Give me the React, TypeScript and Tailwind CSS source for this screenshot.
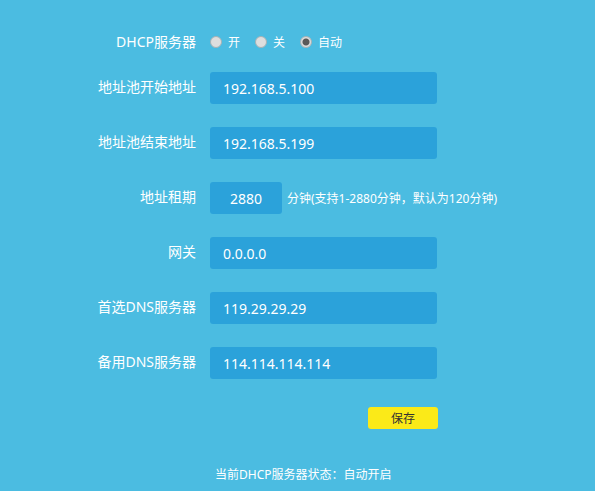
import React, { useState } from 'react'

const inputClass = "h-8 rounded-[3px] bg-[#2ba2da] text-[14px] leading-5 text-white outline-none"

function Row({ label, id, children }: any) {
  return (
    <div className="flex flex-row items-center gap-3.5">
      <label htmlFor={id} className="w-[196px] shrink-0 pb-0.5 text-right text-[14px] leading-5">{label}</label>
      {children}
    </div>
  )
}

function TextRow({ label, id, value }: any) {
  return (
    <Row label={label} id={id}>
      <input id={id} type="text" defaultValue={value} className={`${inputClass} w-full max-w-[227px] min-w-0 px-[13px]`} />
    </Row>
  )
}

export default function App() {
  const [mode, setMode] = useState('auto')
  const modes = [
    { value: 'on', text: '开' },
    { value: 'off', text: '关' },
    { value: 'auto', text: '自动' },
  ]

  return (
    <div className="min-h-screen bg-[#4bbce1] pt-8 pb-1.5 font-['Noto_Sans','Noto_Sans_CJK_SC',sans-serif] text-white">
      <form className="flex flex-col" onSubmit={(e) => e.preventDefault()}>
        <div role="radiogroup" aria-labelledby="dhcp-label" className="flex flex-row items-center gap-3.5">
          <span id="dhcp-label" className="w-[196px] shrink-0 text-right text-[14px] leading-5">DHCP服务器</span>
          <div className="flex flex-row gap-[15px]">
            {modes.map((m) => (
              <label key={m.value} className="flex flex-row items-center gap-1.5 text-[12px] leading-5">
                <input
                  type="radio"
                  name="dhcp"
                  value={m.value}
                  checked={mode === m.value}
                  onChange={() => setMode(m.value)}
                  className="size-3 appearance-none rounded-full border border-[#a5b2b6] bg-[#dedede] checked:bg-[radial-gradient(circle,#5a5a5a_0_3px,#dedede_4px)]"
                />
                <span className="pt-0.5 leading-[18px]">{m.text}</span>
              </label>
            ))}
          </div>
        </div>

        <div className="mt-5 flex flex-col gap-[23px]">
          <TextRow label="地址池开始地址" id="pool-start" value="192.168.5.100" />
          <TextRow label="地址池结束地址" id="pool-end" value="192.168.5.199" />
          <Row label="地址租期" id="lease">
            <div className="flex flex-row items-center gap-[5px]">
              <input id="lease" type="text" defaultValue="2880" className={`${inputClass} w-[72px] text-center`} />
              <span className="pt-0.5 text-[12px] leading-5">分钟(支持1-2880分钟，默认为120分钟)</span>
            </div>
          </Row>
          <TextRow label="网关" id="gateway" value="0.0.0.0" />
          <TextRow label="首选DNS服务器" id="dns1" value="119.29.29.29" />
          <TextRow label="备用DNS服务器" id="dns2" value="114.114.114.114" />
        </div>

        <div className="mt-7 ml-[210px] flex max-w-[228px] justify-end">
          <button type="submit" className="h-[22px] w-[70px] rounded-[3px] bg-[#fbea18] pt-0.5 text-[12px] leading-5 text-[#333333]">保存</button>
        </div>
      </form>
      <p className="mt-9 pl-[215px] text-[12px] leading-5">当前DHCP服务器状态：自动开启</p>
    </div>
  )
}
